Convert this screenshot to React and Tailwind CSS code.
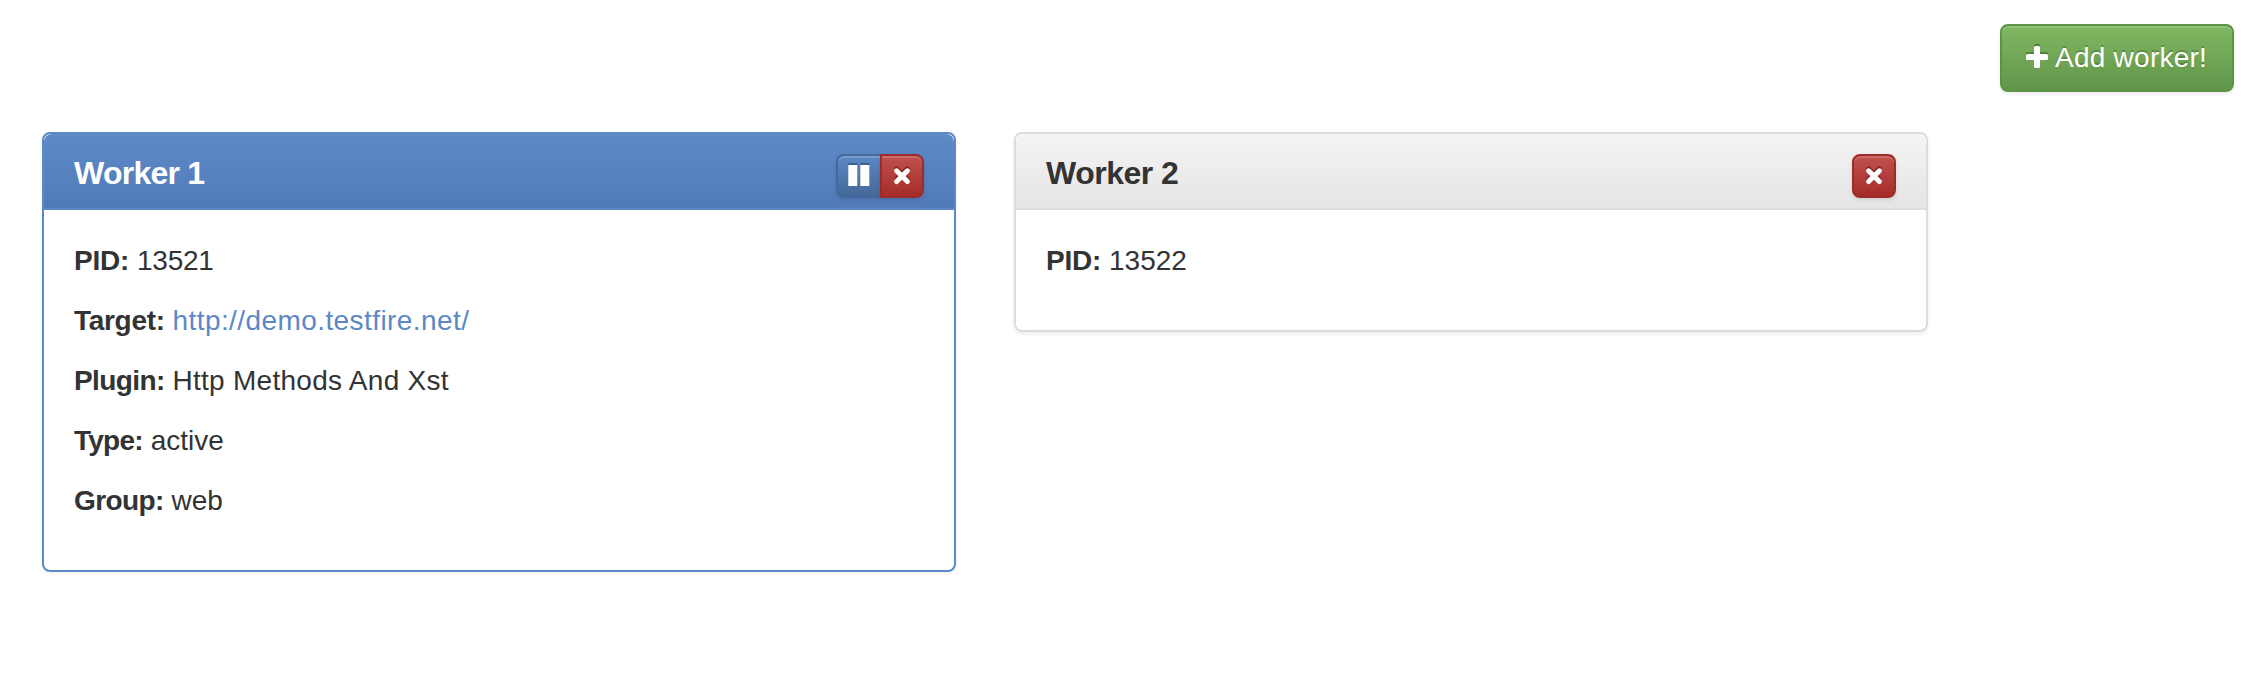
const PlusIcon = () => (
  <svg width="22" height="24" viewBox="0 0 22 24" className="shrink-0 overflow-visible">
    <g fill="#4f8238">
      <rect x="0" y="6" width="22" height="6" rx="1.6" />
      <rect x="8" y="-2" width="6" height="20" rx="1.6" />
    </g>
    <rect x="0" y="8" width="22" height="6" rx="1.6" fill="#fff" />
    <rect x="8" y="0" width="6" height="22" rx="1.6" fill="#fff" />
  </svg>
);

const PauseIcon = () => (
  <svg width="22" height="24" viewBox="0 0 22 24" className="shrink-0 overflow-visible">
    <path d="M0.3 -1h9v4h-9zM12.3 -1h9v4h-9z" fill="#3c608f" />
    <path d="M0.3 1h9v21h-9zM12.3 1h9v21h-9z" fill="#fff" />
  </svg>
);

const RemoveIcon = () => (
  <svg width="18" height="20" viewBox="0 0 18 20" className="shrink-0">
    <g strokeWidth="5" strokeLinecap="round" fill="none">
      <path d="M3.6 3l10.6 10.6M14.2 3l-10.6 10.6" stroke="#86211f" />
      <path d="M3.6 4.8l10.8 10.8M14.4 4.8L3.6 15.6" stroke="#fff" />
    </g>
  </svg>
);

const RemoveButton = ({ shape }) => (
  <button
    className={
      "flex h-11 w-11 items-center justify-center border-2 border-[#9d2b28] bg-linear-to-b from-[#c0504d] to-[#a52c29] shadow-[inset_0_2px_0_rgba(255,255,255,0.16),0_2px_4px_rgba(0,0,0,0.1)] " +
      shape
    }
  >
    <RemoveIcon />
  </button>
);

const Field = ({ label, labelClass, valueClass, children }) => (
  <p className="mb-5 h-10 text-[28px] leading-10 whitespace-nowrap">
    <b className={labelClass}>{label}</b> <span className={valueClass}>{children}</span>
  </p>
);

export default function App() {
  return (
    <div className="h-[696px] w-[2268px] bg-white font-['Liberation_Sans',Arial,sans-serif] text-[#333]">
      <div className="flex justify-end pt-6 pr-[34px]">
        <button className="flex h-[68px] w-[234px] items-center rounded-lg border-2 border-[#5c9346] bg-linear-to-b from-[#80b863] to-[#619449] pl-6 text-white shadow-[inset_0_2px_0_rgba(255,255,255,0.15),0_2px_4px_rgba(0,0,0,0.08)]">
          <PlusIcon />
          <span className="ml-[7px] text-[28px] leading-10 tracking-[0.25px] whitespace-nowrap [text-shadow:0_-2px_0_rgba(0,0,0,0.2)]">
            Add worker!
          </span>
        </button>
      </div>

      <div className="mt-10 ml-[42px] flex items-start gap-[58px]">
        <section className="h-[440px] w-[914px] rounded-lg border-2 border-[#5c88c5] shadow-[0_2px_4px_rgba(0,0,0,0.05)]">
          <header className="flex h-[76px] justify-between rounded-t-lg border-b-2 border-[#5c88c5] bg-linear-to-b from-[#5e8ac8] to-[#517ab8] px-[30px] text-white">
            <h3 className="pt-[19px] text-[32px] leading-[40px] font-bold tracking-[-0.75px]">Worker 1</h3>
            <div className="mt-5 flex">
              <button className="flex h-11 w-11 items-center justify-center rounded-l-lg border-2 border-r-0 border-[#426a9f] bg-linear-to-b from-[#5c88c5] to-[#446999] shadow-[inset_0_2px_0_rgba(255,255,255,0.18),0_2px_4px_rgba(0,0,0,0.1)]">
                <PauseIcon />
              </button>
              <RemoveButton shape="rounded-r-lg" />
            </div>
          </header>
          <div className="px-[30px] pt-[31px]">
            <Field label="PID:" labelClass="tracking-[-0.2px]" valueClass="tracking-[-0.25px]">
              13521
            </Field>
            <Field label="Target:" labelClass="tracking-[-0.3px]" valueClass="tracking-[0.42px] text-[#5c88c5]">
              http://demo.testfire.net/
            </Field>
            <Field label="Plugin:" labelClass="tracking-[-0.6px]" valueClass="tracking-[0.28px]">
              Http Methods And Xst
            </Field>
            <Field label="Type:" labelClass="tracking-[-0.75px]">active</Field>
            <Field label="Group:" labelClass="tracking-[-0.6px]">web</Field>
          </div>
        </section>

        <section className="h-[200px] w-[914px] rounded-lg border-2 border-[#dcdcdc] shadow-[0_2px_4px_rgba(0,0,0,0.08)]">
          <header className="flex h-[76px] justify-between rounded-t-lg border-b-2 border-[#dcdcdc] bg-linear-to-b from-[#f4f4f4] to-[#e5e5e5] px-[30px]">
            <h3 className="pt-[19px] text-[32px] leading-[40px] font-bold tracking-[-0.5px]">Worker 2</h3>
            <div className="mt-5 flex">
              <RemoveButton shape="rounded-lg" />
            </div>
          </header>
          <div className="px-[30px] pt-[31px]">
            <Field label="PID:" labelClass="tracking-[-0.2px]">13522</Field>
          </div>
        </section>
      </div>
    </div>
  );
}
